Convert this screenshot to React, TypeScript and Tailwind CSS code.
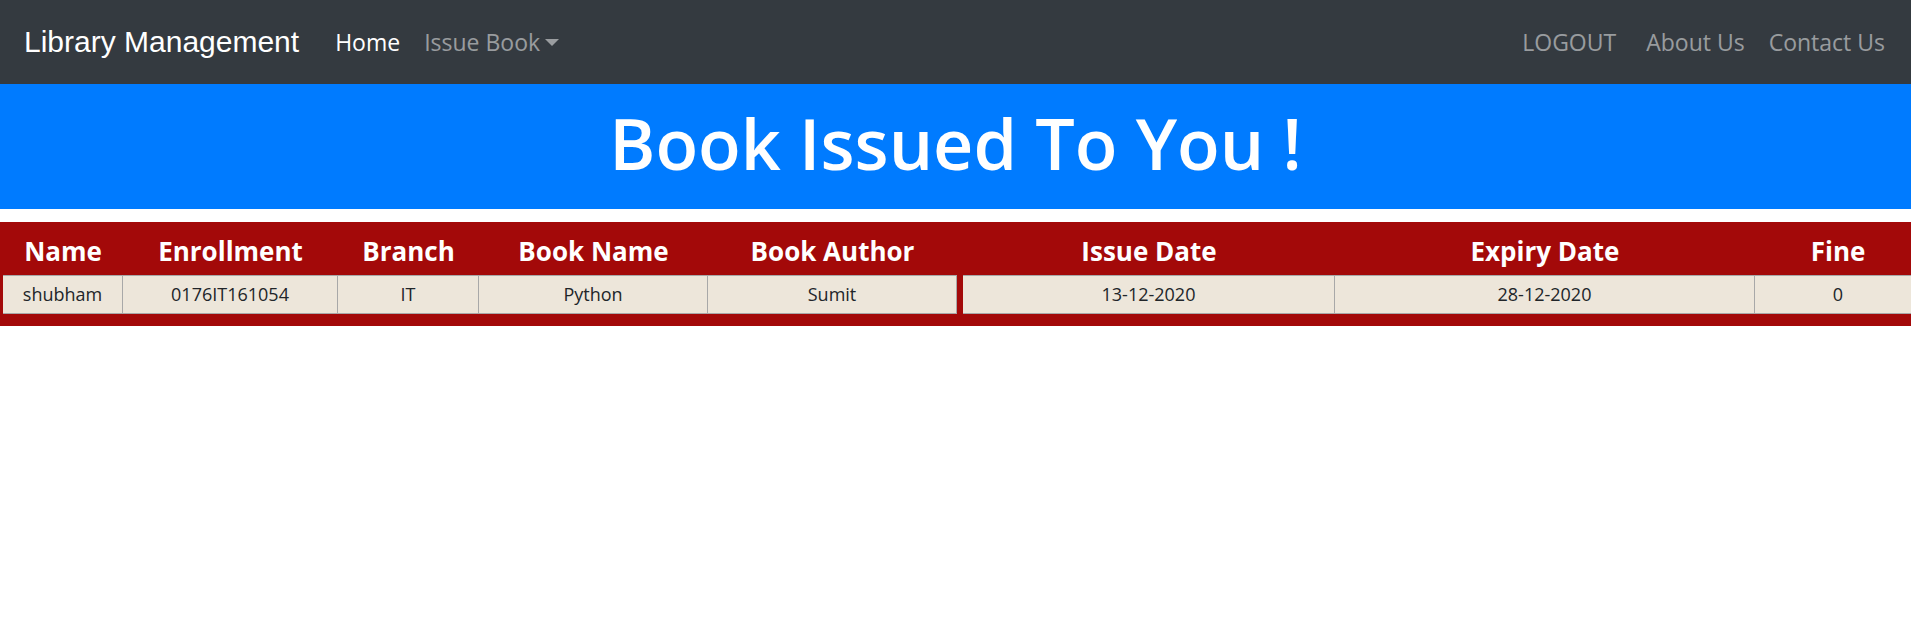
const headers = ['Name', 'Enrollment', 'Branch', 'Book Name', 'Book Author', 'Issue Date', 'Expiry Date', 'Fine'];
const row = ['shubham', '0176IT161054', 'IT', 'Python', 'Sumit', '13-12-2020', '28-12-2020', '0'];

export default function App() {
  return (
    <div className="w-full min-h-screen overflow-hidden bg-white font-['Open_Sans',sans-serif]">
      {/* Navbar */}
      <nav className="h-[84px] bg-[#343a40] flex items-center px-6">
        <a className="font-['Liberation_Sans',Arial,sans-serif] text-[30px] text-white mr-6 leading-none">Library Management</a>
        <ul className="flex items-center text-[23px]">
          <li className="px-3 text-white">Home</li>
          <li className="px-3 text-white/50 flex items-center">
            Issue Book
            <span className="ml-[5px] inline-block w-0 h-0 border-x-[7px] border-x-transparent border-t-[7px] border-t-[#9a9da0]" />
          </li>
        </ul>
        <ul className="ml-auto flex items-center text-[23px] text-white/50">
          <li className="px-3 mr-[6px]">LOGOUT</li>
          <li className="px-3">About Us</li>
          <li className="pl-3 mr-[2px]">Contact Us</li>
        </ul>
      </nav>

      {/* Banner */}
      <div className="h-[125px] bg-[#007bff] flex items-center justify-center pb-[8px]">
        <h1 className="text-white text-[70px] font-semibold leading-none">Book Issued To You !</h1>
      </div>

      {/* Issued book table */}
      <div className="mt-[13px] w-[1924px] bg-[#a30909] px-[3px] pb-[12px]">
        <div className="grid grid-cols-[120px_215px_141px_229px_255px_372px_420px_166px]">
          {headers.map((h, i) => (
            <div
              key={h}
              className={`h-[53px] pt-[5px] flex items-center justify-center text-white font-bold text-[26px] ${i === 4 ? 'mr-[6px]' : ''}`}
            >
              {h}
            </div>
          ))}
          {row.map((c, i) => (
            <div
              key={i}
              className={`h-[39px] flex items-center justify-center bg-[#ede6da] text-[#212529] text-[18px] border-y border-[#a8a8a8] ${i === 4 ? 'mr-[6px] border-r' : ''} ${i !== 4 && i !== 7 ? 'border-r' : ''}`}
            >
              {c}
            </div>
          ))}
        </div>
      </div>
    </div>
  );
}
